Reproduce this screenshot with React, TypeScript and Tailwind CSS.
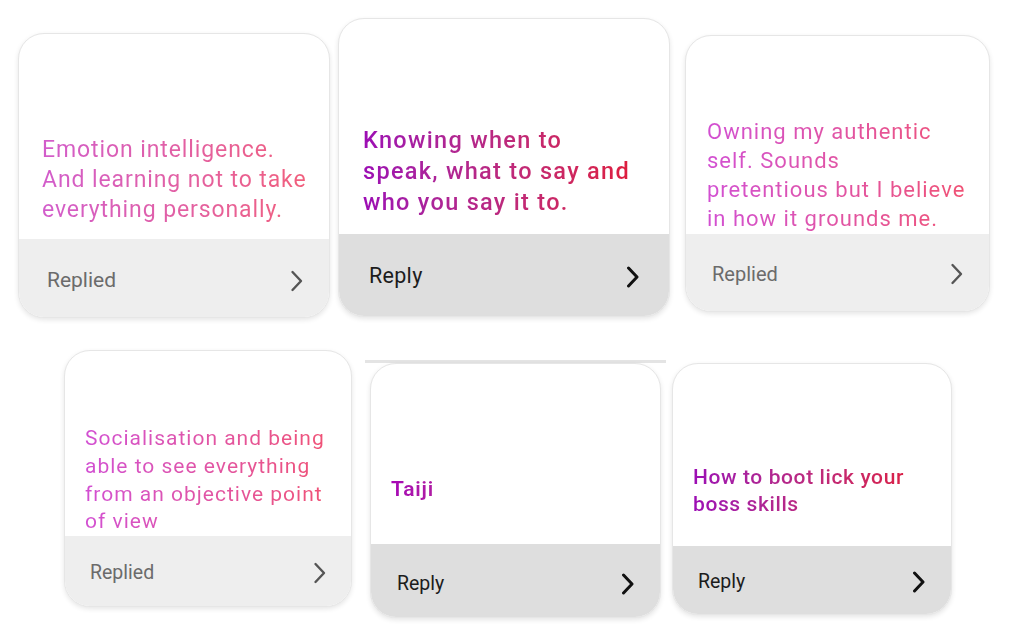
type Card = {
  lines: string[];
  replied: boolean;
  box: string;
  body: string;
  textCls: string;
  footer: string;
  label: string;
  topLine?: boolean;
};

const rowOne: Card[] = [
  {
    lines: ["Emotion intelligence.", "And learning not to take", "everything personally."],
    replied: true,
    box: "mt-[15px] w-[312px] h-[285px]",
    body: "pb-[14px] pl-[23px]",
    textCls: "text-[23px] leading-[30px] tracking-[0.9px] from-[#d25ccb] to-[#f45e74]",
    footer: "h-[78px] pl-[28px] pr-[25px] pt-[5px]",
    label: "text-[21px]",
  },
  {
    lines: ["Knowing when to", "speak, what to say and", "who you say it to."],
    replied: false,
    box: "ml-[8px] w-[332px] h-[299px]",
    body: "pb-[16px] pl-[24px]",
    textCls: "text-[23.5px] leading-[31px] tracking-[1.3px] font-medium from-[#9c0cb4] to-[#e80c16]",
    footer: "h-[82px] pl-[30px] pr-[29px] pt-[3px]",
    label: "text-[21.5px] tracking-[0.3px]",
  },
  {
    lines: ["Owning my authentic", "self. Sounds", "pretentious but I believe", "in how it grounds me."],
    replied: true,
    box: "ml-[15px] mt-[17px] w-[305px] h-[277px]",
    body: "pb-[1px] pl-[21px]",
    textCls: "text-[22px] leading-[29px] tracking-[1px] from-[#d24fd2] to-[#f3506a]",
    footer: "h-[77px] pl-[26px] pr-[25px] pt-[3px]",
    label: "text-[20px]",
  },
];

const rowTwo: Card[] = [
  {
    lines: ["Socialisation and being", "able to see everything", "from an objective point", "of view"],
    replied: true,
    box: "ml-[64px] w-[288px] h-[257px]",
    body: "pb-0 pl-[20px]",
    textCls: "text-[21px] leading-[27.7px] tracking-[1px] from-[#d24fd2] to-[#f3506a]",
    footer: "h-[70px] pl-[25px] pr-[24px] pt-[4px]",
    label: "text-[19.5px]",
  },
  {
    lines: ["Taiji"],
    replied: false,
    box: "ml-[18px] mt-[10px] w-[291px] h-[258px]",
    body: "pb-[41px] pl-[20px]",
    textCls: "text-[21px] leading-[28px] tracking-[0.8px] font-semibold from-[#a606b6] to-[#e80c16]",
    footer: "h-[73px] pl-[26px] pr-[25px] pt-[6px]",
    label: "text-[19.5px]",
    topLine: true,
  },
  {
    lines: ["How to boot lick your", "boss skills"],
    replied: false,
    box: "ml-[11px] mt-[13px] w-[280px] h-[252px]",
    body: "pb-[28px] pl-[20px]",
    textCls: "text-[21px] leading-[27px] tracking-[0.6px] font-medium from-[#9c0cb4] to-[#e80c16]",
    footer: "h-[68px] pl-[25px] pr-[25px] pt-[3px]",
    label: "text-[19.5px]",
  },
];

function Chevron({ bold }: { bold: boolean }) {
  return (
    <svg width="14" height="22" viewBox="0 0 14 22" fill="none" className={bold ? "text-[#111111]" : "text-[#555555]"}>
      <polyline
        points="2.5,2 11,11 2.5,20"
        stroke="currentColor"
        strokeWidth={bold ? 3 : 2.4}
        strokeLinecap="round"
        strokeLinejoin="round"
      />
    </svg>
  );
}

function ReplyCard({ card }: { card: Card }) {
  return (
    <div className={`flex shrink-0 flex-col ${card.box}`}>
      {card.topLine && <div className="-mx-[5px] h-[3px] shrink-0 bg-[#e4e4e4]" />}
      <div className="flex flex-1 flex-col overflow-hidden rounded-[26px] border border-[#e6e6e6] bg-white shadow-[0_2px_5px_rgba(0,0,0,0.10)]">
        <div className={`flex flex-1 flex-col justify-end ${card.body}`}>
          <p className={`whitespace-nowrap bg-linear-to-r bg-clip-text text-transparent ${card.textCls}`}>
            {card.lines.map((line, i) => (
              <span key={i} className="block">
                {line}
              </span>
            ))}
          </p>
        </div>
        <div
          className={`flex shrink-0 items-center justify-between ${card.footer} ${
            card.replied ? "bg-[#eeeeee]" : "bg-[#dedede]"
          }`}
        >
          <span className={`${card.label} ${card.replied ? "text-[#6b6b6b]" : "text-[#1c1c1c]"}`}>
            {card.replied ? "Replied" : "Reply"}
          </span>
          <Chevron bold={!card.replied} />
        </div>
      </div>
    </div>
  );
}

export default function App() {
  return (
    <main className="h-[637px] w-[1024px] overflow-hidden bg-white pt-[18px] font-['Roboto','Noto_Sans',sans-serif]">
      <div className="flex items-start pl-[18px]">
        {rowOne.map((card) => (
          <ReplyCard key={card.lines[0]} card={card} />
        ))}
      </div>
      <div className="mt-[32px] flex items-start">
        {rowTwo.map((card) => (
          <ReplyCard key={card.lines[0]} card={card} />
        ))}
      </div>
    </main>
  );
}
